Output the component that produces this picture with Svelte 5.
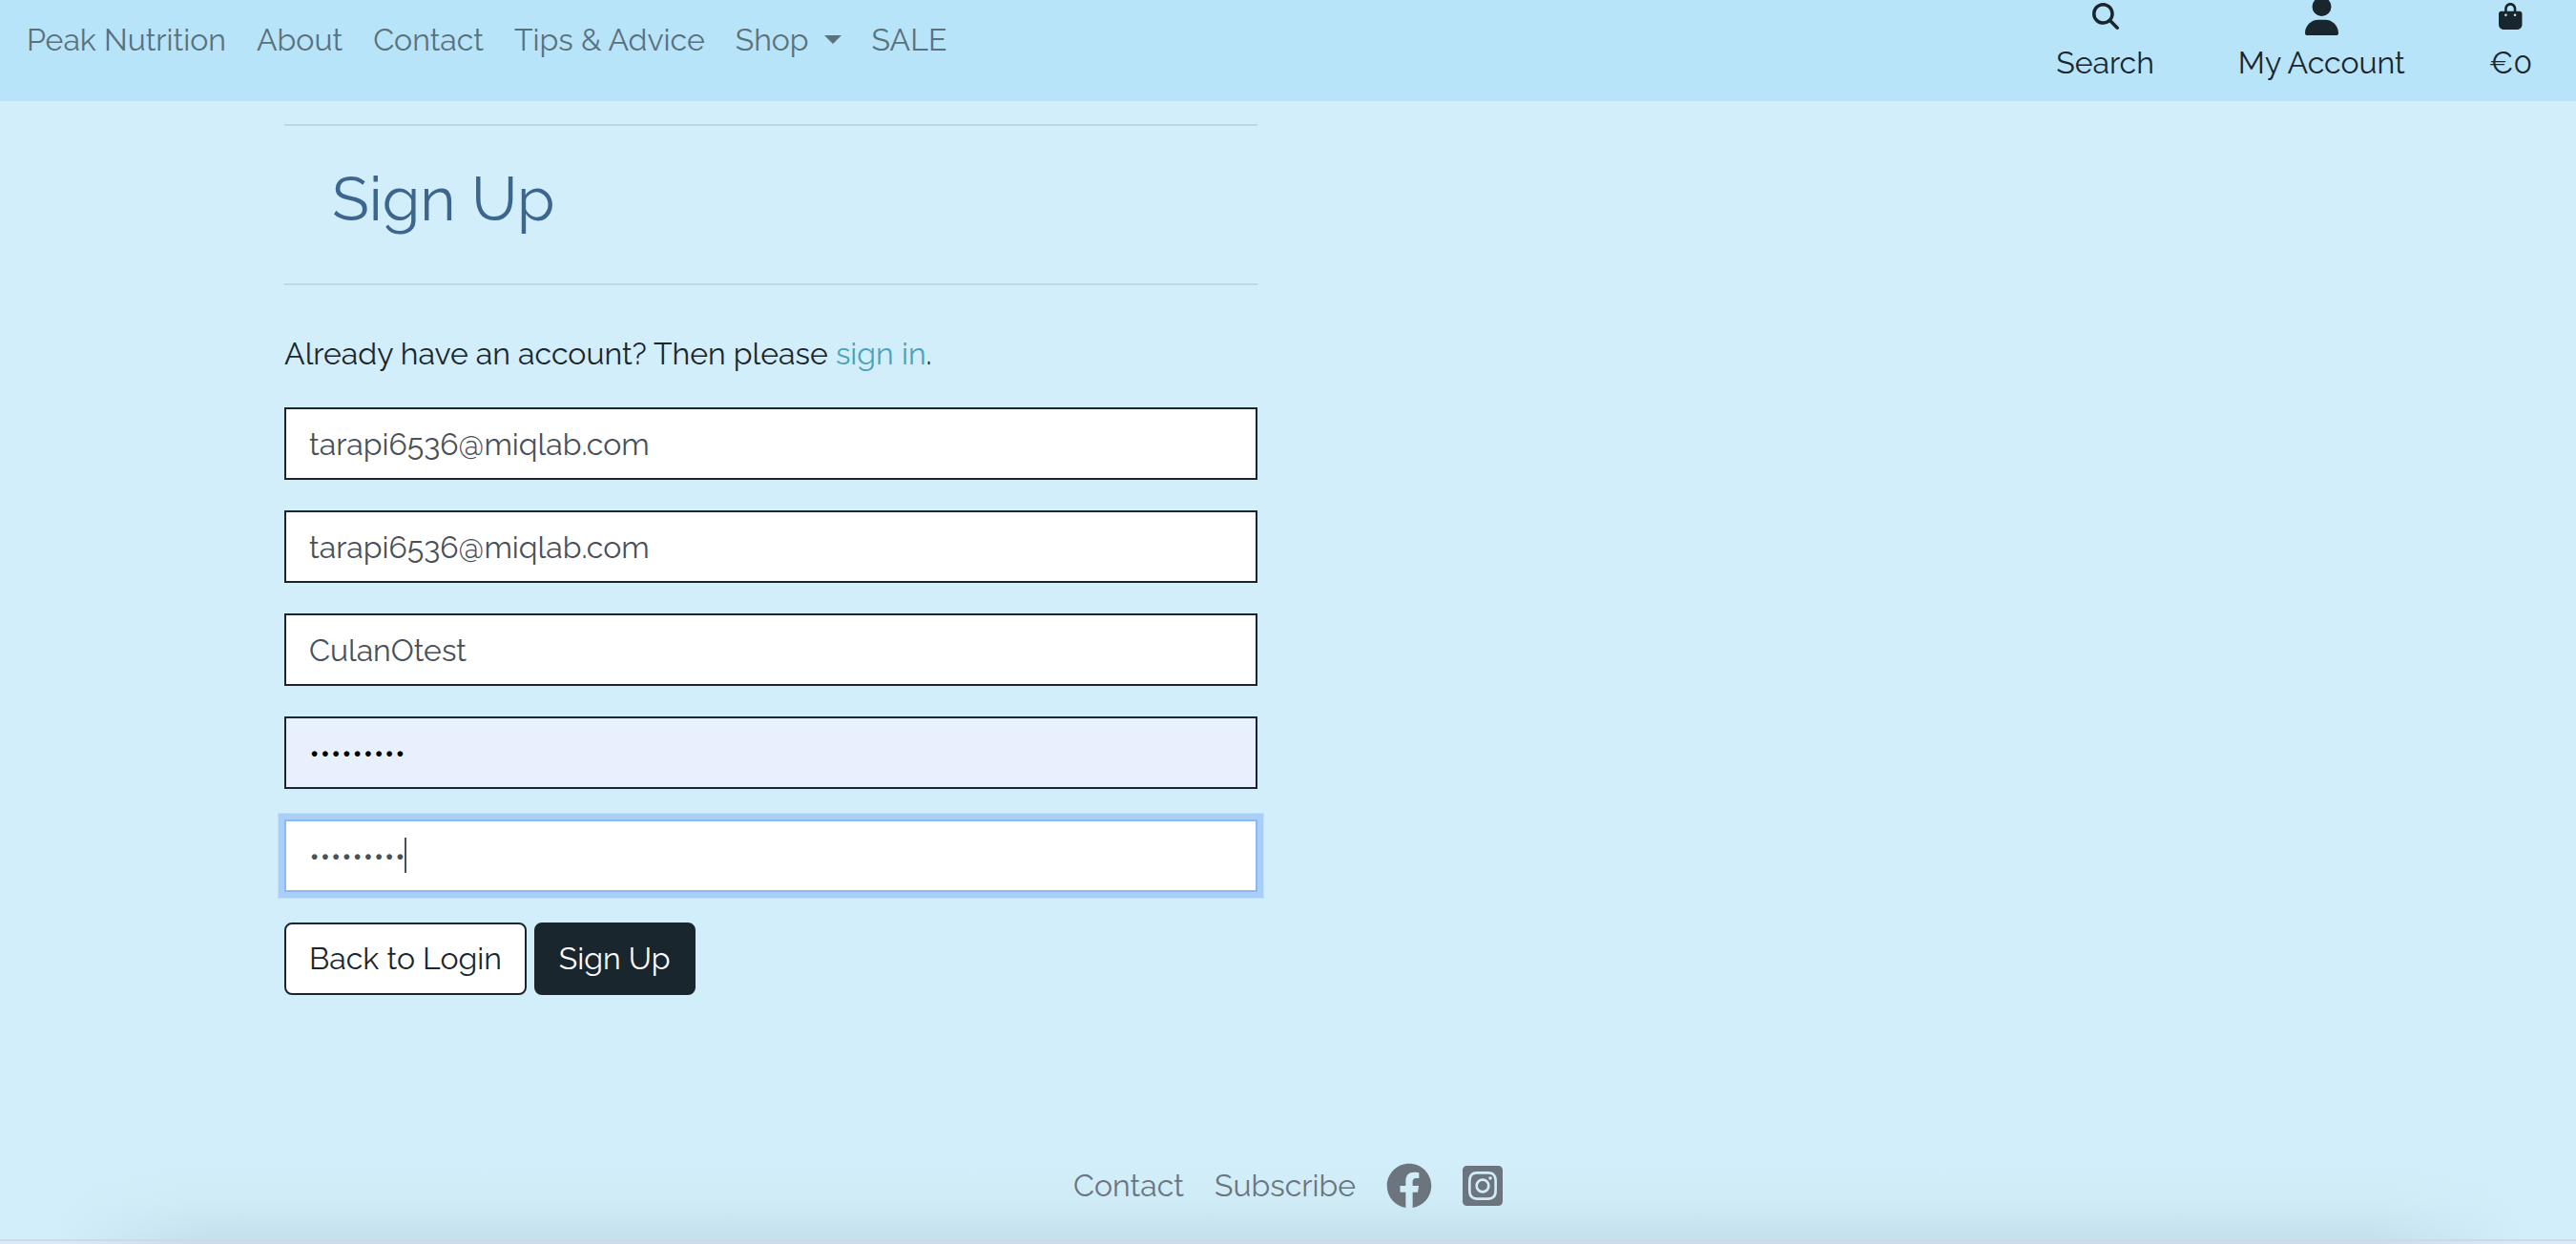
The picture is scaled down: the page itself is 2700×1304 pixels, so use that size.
<script>
  const navLinks = ['About', 'Contact', 'Tips & Advice'];
  let fields = $state([
    { id: 'email', label: 'E-mail', type: 'email', value: 'tarapi6536@miqlab.com' },
    { id: 'email2', label: 'E-mail confirmation', type: 'email', value: 'tarapi6536@miqlab.com' },
    { id: 'username', label: 'Username', type: 'text', value: 'CulanOtest' },
    { id: 'password1', label: 'Password', type: 'password', value: 'culantest', autofilled: true },
    { id: 'password2', label: 'Password (again)', type: 'password', value: 'culantest', active: true }
  ]);
</script>

<div class="page">
  <header>
    <nav class="links" aria-label="Main">
      <a href="/">Peak Nutrition</a>
      {#each navLinks as link}
        <a href="/">{link}</a>
      {/each}
      <button class="dropdown" type="button" aria-haspopup="true">Shop <span class="caret"></span></button>
      <a href="/">SALE</a>
    </nav>
    <nav class="tools" aria-label="Account">
      <button type="button">
        <svg class="small" viewBox="0 0 512 512" aria-hidden="true"><path d="M416 208c0 45.900-14.900 88.300-40 122.700L502.600 457.400c12.500 12.500 12.500 32.800 0 45.300s-32.800 12.500-45.300 0L330.700 376c-34.400 25.200-76.800 40-122.700 40C93.100 416 0 322.900 0 208S93.100 0 208 0S416 93.100 416 208zM208 352a144 144 0 1 0 0-288 144 144 0 1 0 0 288z" /></svg>
        <span>Search</span>
      </button>
      <a href="/">
        <svg class="user" viewBox="0 0 448 512" aria-hidden="true"><path d="M224 256A128 128 0 1 0 224 0a128 128 0 1 0 0 256zm-45.700 48C79.800 304 0 383.800 0 482.300C0 498.700 13.300 512 29.700 512H418.300c16.400 0 29.700-13.300 29.700-29.700C448 383.800 368.200 304 269.700 304H178.300z" /></svg>
        <span>My Account</span>
      </a>
      <a href="/">
        <svg class="small" viewBox="0 0 448 512" aria-hidden="true"><path d="M160 112c0-35.300 28.700-64 64-64s64 28.700 64 64v48H160V112zm-48 48H48c-26.500 0-48 21.500-48 48V416c0 53 43 96 96 96H352c53 0 96-43 96-96V208c0-26.500-21.500-48-48-48H336V112C336 50.100 285.900 0 224 0S112 50.100 112 112v48zm24 48a24 24 0 1 1 0 48 24 24 0 1 1 0-48zm152 24a24 24 0 1 1 48 0 24 24 0 1 1-48 0z" /></svg>
        <span>€0</span>
      </a>
    </nav>
  </header>

  <main>
    <section>
      <hr />
      <h1>Sign Up</h1>
      <hr />
      <p>Already have an account? Then please <a href="/">sign in</a>.</p>
      <form>
        {#each fields as field}
          <div class="field">
            <input
              id={field.id}
              type={field.type}
              aria-label={field.label}
              bind:value={field.value}
              autocomplete="off"
              class:autofilled={field.autofilled}
              class:active={field.active}
            />
            {#if field.active}<span class="cursor" aria-hidden="true"></span>{/if}
          </div>
        {/each}
        <div class="actions">
          <a class="btn light" href="/">Back to Login</a>
          <button class="btn dark" type="button">Sign Up</button>
        </div>
      </form>
    </section>
  </main>

  <footer>
    <nav class="foot-links" aria-label="Footer">
      <a href="/">Contact</a>
      <a href="/">Subscribe</a>
      <a href="/" aria-label="Facebook">
        <svg viewBox="0 0 512 512" aria-hidden="true"><path d="M504 256C504 119 393 8 256 8S8 119 8 256c0 123.780 90.690 226.380 209.250 245V327.690h-63V256h63v-54.640c0-62.150 37-96.480 93.670-96.480 27.140 0 55.520 4.840 55.520 4.840v61h-31.280c-30.800 0-40.410 19.120-40.410 38.770V256h68.780l-11 71.690h-57.780V501C413.310 482.380 504 379.780 504 256z" /></svg>
      </a>
      <a href="/" aria-label="Instagram">
        <svg viewBox="0 0 448 512" aria-hidden="true"><path d="M224,202.660A53.340,53.340,0,1,0,277.360,256,53.380,53.380,0,0,0,224,202.660Zm124.710-41a54,54,0,0,0-30.410-30.410c-21-8.290-71-6.430-94.300-6.430s-73.250-1.930-94.310,6.430a54,54,0,0,0-30.410,30.410c-8.280,21-6.430,71.050-6.430,94.330S91,329.260,99.320,350.330a54,54,0,0,0,30.410,30.410c21,8.290,71,6.430,94.310,6.430s73.240,1.930,94.300-6.430a54,54,0,0,0,30.410-30.410c8.350-21,6.430-71.050,6.430-94.330S357.100,182.740,348.750,161.670ZM224,338a82,82,0,1,1,82-82A81.900,81.900,0,0,1,224,338Zm85.380-148.300a19.140,19.140,0,1,1,19.130-19.140A19.100,19.100,0,0,1,309.420,189.740ZM400,32H48A48,48,0,0,0,0,80V432a48,48,0,0,0,48,48H400a48,48,0,0,0,48-48V80A48,48,0,0,0,400,32ZM382.880,322c-1.290,25.630-7.140,48.340-25.850,67s-41.400,24.630-67,25.850c-26.410,1.490-105.590,1.490-132,0-25.630-1.290-48.260-7.150-67-25.850s-24.630-41.420-25.850-67c-1.490-26.420-1.490-105.610,0-132,1.290-25.630,7.070-48.340,25.850-67s41.470-24.560,67-25.780c26.410-1.490,105.590-1.490,132,0,25.630,1.290,48.330,7.150,67,25.850s24.630,41.420,25.850,67.050C384.370,216.440,384.370,295.560,382.880,322Z" /></svg>
      </a>
    </nav>
  </footer>
</div>

<style>
  :global(body) {
    background: #d2eefa;
  }

  .page {
    display: flex;
    flex-direction: column;
    min-height: 100vh;
    box-sizing: border-box;
    font: 32px/48px Raleway, "Open Sans", sans-serif;
    color: #1a262e;
  }

  a {
    color: inherit;
    text-decoration: none;
  }

  button,
  input {
    font: inherit;
    color: inherit;
  }

  svg {
    display: block;
    fill: currentColor;
  }

  header {
    display: flex;
    justify-content: space-between;
    padding: 0 46px 16px 28px;
    background: #b7e4f9;
  }

  .links {
    display: flex;
    align-items: center;
    align-self: flex-start;
    gap: 32px;
    padding-top: 18px;
    color: #5b717c;
  }

  header button {
    padding: 0;
    border: 0;
    background: none;
  }

  .dropdown {
    display: flex;
    align-items: center;
    gap: 16px;
  }

  .caret {
    border: 9px solid transparent;
    border-top-color: currentColor;
    border-bottom: 0;
    margin-bottom: 2px;
  }

  .tools {
    display: flex;
    gap: 88px;
  }

  .tools a,
  .tools button {
    display: grid;
    grid-template-rows: 42px 48px;
    justify-items: center;
  }

  .small {
    height: 28px;
    margin-top: 3px;
  }

  .user {
    height: 40px;
    margin-top: -3px;
  }

  main {
    flex: 1;
    display: grid;
    grid-template-columns: 1fr 1fr;
    gap: 64px;
    padding: 24px 298px 0;
  }

  hr {
    margin: 0;
    border: 0;
    border-top: 2px solid #bed7e2;
  }

  h1 {
    margin: 0;
    padding: 39px 50px 50px;
    font-size: 64px;
    line-height: 76px;
    font-weight: 400;
    color: #3d668f;
  }

  p {
    margin: 48px 0 32px;
  }

  p a {
    color: #4ba3b9;
  }

  form {
    display: grid;
    gap: 32px;
  }

  .field {
    position: relative;
    display: grid;
  }

  input {
    box-sizing: border-box;
    width: 100%;
    height: 76px;
    padding: 12px 24px;
    border: 2px solid #1a262e;
    border-radius: 0;
    background: #fff;
    color: #495057;
    outline: 0;
  }

  .autofilled {
    background: #e8f0fe;
    color: #000;
  }

  .active {
    border-color: #8bb9fe;
    box-shadow: 0 0 0 6px #a9cff9, 0 0 0 7px #bfe0fa;
  }

  .cursor {
    position: absolute;
    left: 126px;
    top: 19px;
    width: 2px;
    height: 37px;
    background: #495057;
  }

  .actions {
    display: flex;
    gap: 8px;
  }

  .btn {
    padding: 12px 24px;
    border: 2px solid #1a262e;
    border-radius: 8px;
  }

  .light {
    background: #fff;
  }

  .dark {
    background: #1a262e;
    color: #fff;
  }

  footer {
    padding-bottom: 3px;
    background:
      linear-gradient(to right, #d2eefa 2%, transparent 8%, transparent 92%, #d2eefa 98%),
      linear-gradient(#d2eefa 30%, #cfebf6 62%, #c4dfec);
  }

  .foot-links {
    display: flex;
    justify-content: center;
    gap: 32px;
    padding: 32px 0;
    border-bottom: 2px solid #d3d8dc;
    color: #6c757d;
  }

  .foot-links svg {
    height: 48px;
  }
</style>
